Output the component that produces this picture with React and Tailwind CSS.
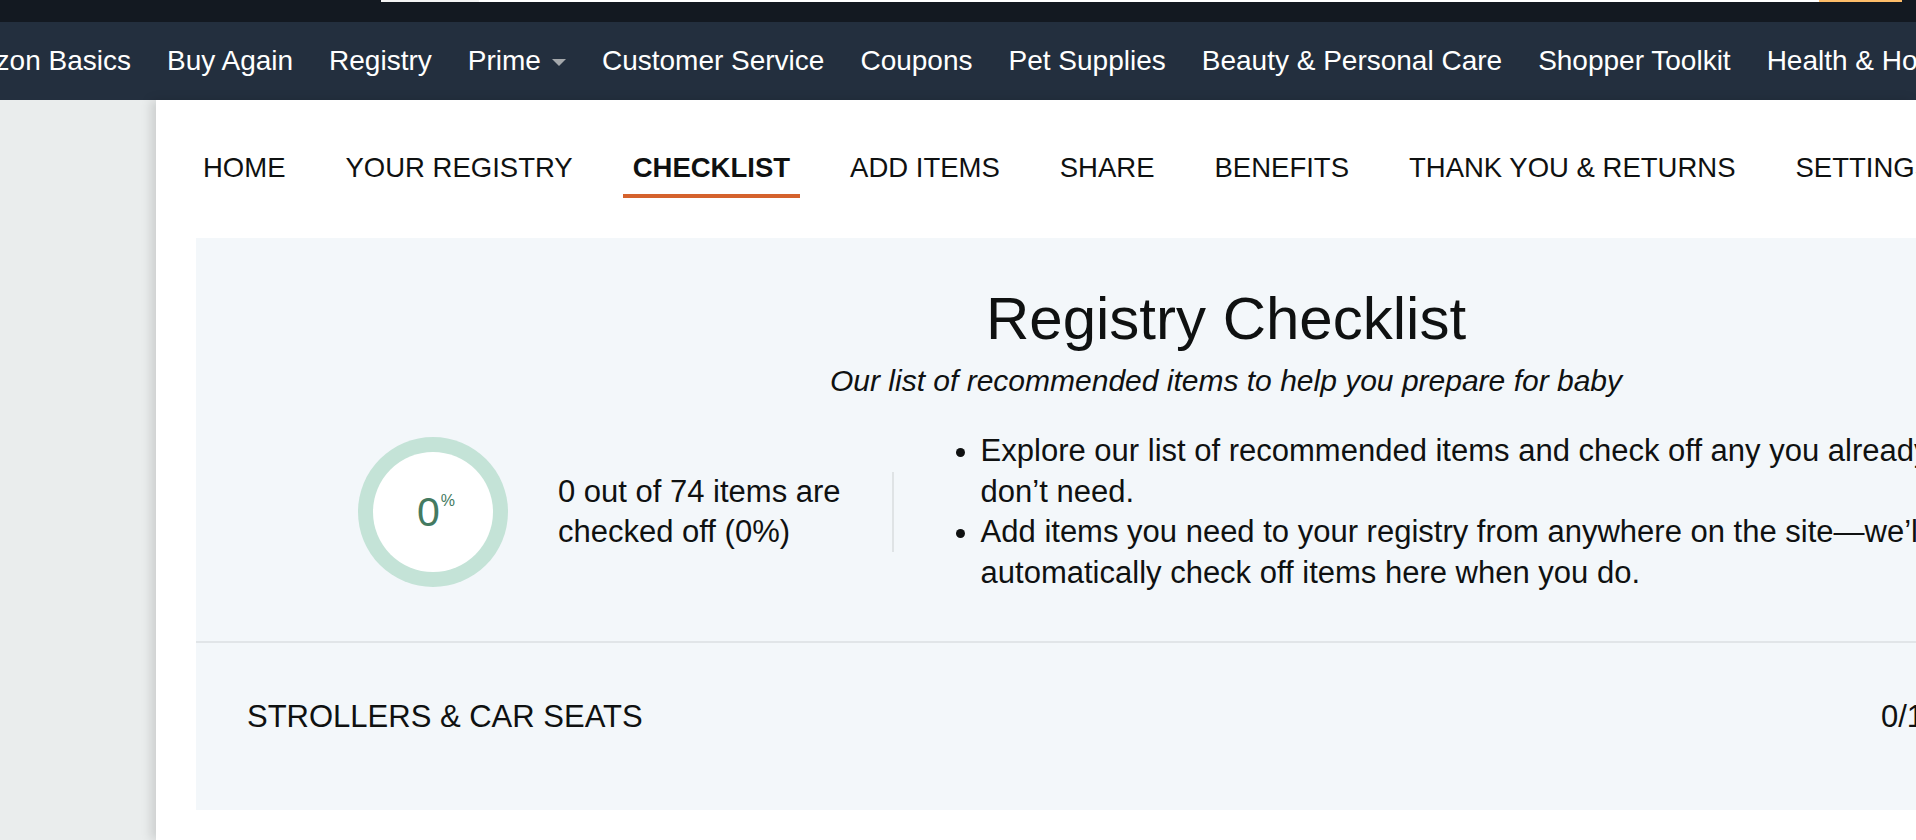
import React from "react";

const navLinks = [
  "Amazon Basics",
  "Buy Again",
  "Registry",
  "Prime",
  "Customer Service",
  "Coupons",
  "Pet Supplies",
  "Beauty & Personal Care",
  "Shopper Toolkit",
  "Health & Household",
];

const tabs = [
  "HOME",
  "YOUR REGISTRY",
  "CHECKLIST",
  "ADD ITEMS",
  "SHARE",
  "BENEFITS",
  "THANK YOU & RETURNS",
  "SETTINGS",
];

const ProgressRing = ({ percent = 0 }) => (
  <div className="w-[150px] h-[150px] rounded-full bg-[#c4e3d7] flex items-center justify-center shrink-0">
    <div className="w-[120px] h-[120px] rounded-full bg-white flex items-center justify-center">
      <span className="flex items-start text-[#447a61] ml-[6px]">
        <span className="text-[41px] leading-[40px]">{percent}</span>
        <span className="text-[16px] leading-[16px] mt-[1px] ml-[1px]">%</span>
      </span>
    </div>
  </div>
);

export default function App() {
  return (
    <div className="w-[1916px] h-[840px] overflow-hidden bg-[#eaeded] font-['Liberation_Sans',Arial,sans-serif] text-[#0f1111]">
      {/* Top bar (search box cut off) */}
      <div className="h-[22px] bg-[#131921] flex items-start pl-[381px] pr-[14px]">
        <div className="h-[2px] w-[98px] bg-[#f3f3f3]" />
        <div className="h-[2px] flex-1 bg-white" />
        <div className="h-[2px] w-[83px] bg-[#febd69]" />
      </div>

      {/* Main nav */}
      <nav className="h-[78px] bg-[#232f3e] flex items-center whitespace-nowrap overflow-hidden">
        <div className="flex items-center gap-[36px] ml-[-62px] text-white text-[28px] leading-[34px]">
          {navLinks.map((link) => (
            <span key={link} className="flex items-center">
              {link}
              {link === "Prime" && (
                <svg className="ml-[11px] mt-[3px]" width="14" height="8" viewBox="0 0 14 8">
                  <path d="M0 0 L14 0 L7 7 Z" fill="#a4a8ab" />
                </svg>
              )}
            </span>
          ))}
        </div>
      </nav>

      <div className="flex h-[740px]">
        <div className="w-[156px] shrink-0 bg-[#eaeded]" />

        <main className="relative flex-1 bg-white shadow-[-5px_0_10px_rgba(0,0,0,0.13)] overflow-hidden">
          {/* Registry tabs */}
          <div className="flex items-start gap-[40px] pl-[37px] pt-[51px] whitespace-nowrap">
            {tabs.map((tab) => {
              const active = tab === "CHECKLIST";
              return (
                <div
                  key={tab}
                  className={`px-[10px] pb-[10px] text-[27.5px] leading-[33px] border-b-4 ${
                    active ? "font-bold border-[#d5622d]" : "border-transparent"
                  }`}
                >
                  {tab}
                </div>
              );
            })}
          </div>

          {/* Checklist panel */}
          <section className="ml-[40px] mt-[40px] w-[2060px] bg-[#f3f7fa]">
            <div className="pt-[45px] pb-[48px] border-b-2 border-[#e1e5e8]">
              <h1 className="text-center text-[60px] leading-[72px] font-normal">
                Registry Checklist
              </h1>
              <p className="text-center italic text-[30px] leading-[40px] mt-[6px]">
                Our list of recommended items to help you prepare for baby
              </p>

              <div className="flex items-center mt-[30px] pl-[162px] whitespace-nowrap">
                <ProgressRing percent={0} />
                <p className="ml-[50px] text-[31px] leading-[40px]">
                  0 out of 74 items are
                  <br />
                  checked off (0%)
                </p>
                <div className="ml-[51px] w-[2px] h-[80px] bg-[#dfe3e5]" />
                <ul className="ml-[65px] pl-[22px] list-disc text-[31px] leading-[40.5px]">
                  <li>
                    Explore our list of recommended items and check off any you already
                    <br />
                    don’t need.
                  </li>
                  <li>
                    Add items you need to your registry from anywhere on the site—we’ll
                    <br />
                    automatically check off items here when you do.
                  </li>
                </ul>
              </div>
            </div>

            <div className="h-[167px] pb-[20px] grid grid-cols-[1634px_1fr] items-center pl-[51px] text-[31px] leading-[40px] whitespace-nowrap">
              <span>STROLLERS &amp; CAR SEATS</span>
              <span>0/14</span>
            </div>
          </section>
        </main>
      </div>
    </div>
  );
}
